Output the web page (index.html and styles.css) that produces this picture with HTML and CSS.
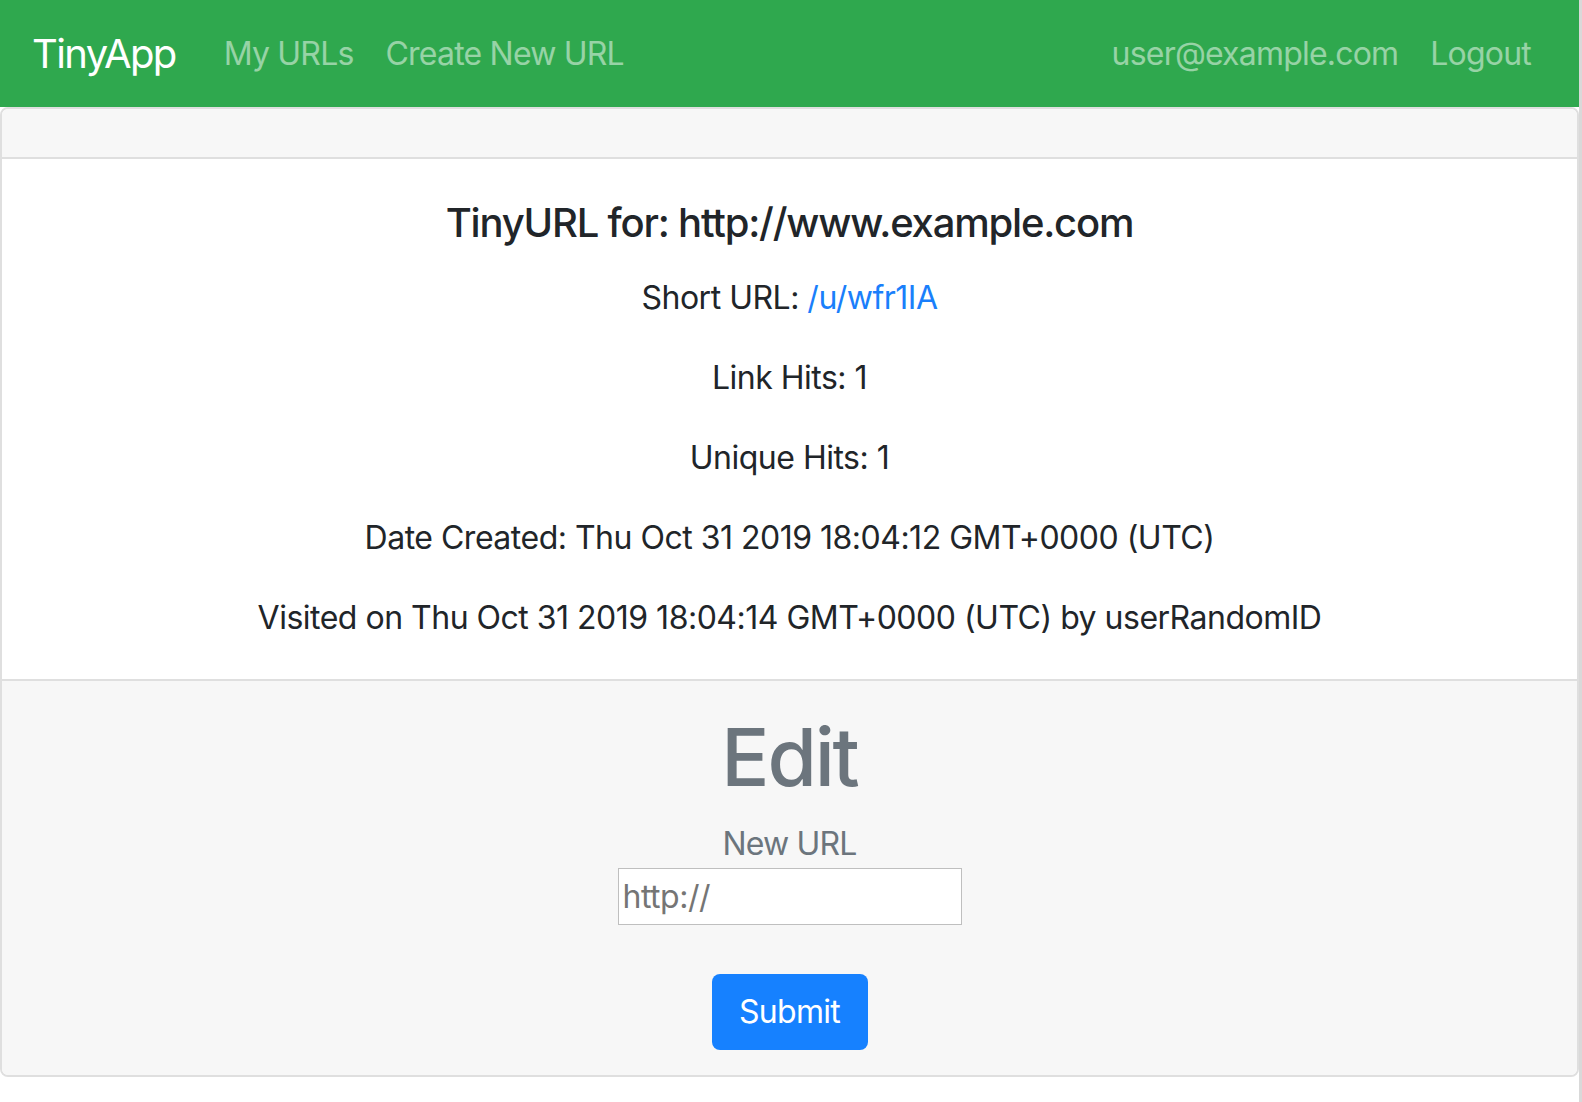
FILE: index.html
```html
<!DOCTYPE html>
<html lang="en">
<head>
<meta charset="utf-8">
<title>TinyApp</title>
<link rel="stylesheet" href="styles.css">
</head>
<body>
<nav class="navbar">
  <a class="brand" href="#">TinyApp</a>
  <ul class="nav">
    <li><a class="nav-link" href="#">My URLs</a></li>
    <li><a class="nav-link" href="#">Create New URL</a></li>
  </ul>
  <ul class="nav nav-right">
    <li><span class="nav-link">user@example.com</span></li>
    <li><a class="nav-link" href="#">Logout</a></li>
  </ul>
</nav>
<main class="card">
  <div class="card-header"></div>
  <div class="card-body">
    <h5 class="card-title">TinyURL for: http://www.example.com</h5>
    <p class="card-text">Short URL: <a class="link" href="#">/u/wfr1IA</a></p>
    <p class="card-text">Link Hits: 1</p>
    <p class="card-text">Unique Hits: 1</p>
    <p class="card-text">Date Created: Thu Oct 31 2019 18:04:12 GMT+0000 (UTC)</p>
    <p class="card-text">Visited on Thu Oct 31 2019 18:04:14 GMT+0000 (UTC) by userRandomID</p>
  </div>
  <div class="card-footer">
    <h1 class="edit-title">Edit</h1>
    <form class="edit-form">
      <label class="edit-label" for="newURL">New URL</label>
      <input class="edit-input" id="newURL" type="text" placeholder="http://">
      <button class="btn-primary" type="submit">Submit</button>
    </form>
  </div>
</main>
</body>
</html>
```
FILE: styles.css
```css
html, body {
  margin: 0;
  padding: 0;
}
body {
  background: #fff;
  min-height: 100vh;
  box-sizing: border-box;
  border-right: 3px solid #d9d9d9;
  font-family: Inter, "Liberation Sans", sans-serif;
  font-size: 32px;
  line-height: 48px;
  letter-spacing: -0.5px;
  color: #212529;
}
.navbar {
  display: flex;
  align-items: center;
  height: 107px;
  padding: 0 32px;
  box-sizing: border-box;
  background: #2fa84e;
}
.brand {
  font-size: 40px;
  line-height: 60px;
  letter-spacing: -1.6px;
  color: #fff;
  text-decoration: none;
  margin-right: 32px;
}
.nav {
  display: flex;
  list-style: none;
  margin: 0;
  padding: 0;
}
.nav-right {
  margin-left: auto;
}
.nav-link {
  display: block;
  padding: 0 16px;
  letter-spacing: -0.8px;
  color: rgba(255, 255, 255, 0.5);
  text-decoration: none;
}
.card {
  display: block;
  border: 2px solid #dfdfdf;
  border-radius: 8px;
  overflow: hidden;
}
.card-header {
  height: 48px;
  background: #f7f7f7;
  border-bottom: 2px solid #dfdfdf;
}
.card-body {
  padding: 40px 40px 37px;
  text-align: center;
}
.card-title {
  font-size: 40px;
  font-weight: 500;
  line-height: 48px;
  letter-spacing: -1.2px;
  margin: 0 0 27px;
}
.card-text {
  margin: 0 0 32px;
}
.card-text:last-child {
  margin-bottom: 0;
}
.link {
  color: #1a7ffb;
  text-decoration: none;
}
.card-footer {
  padding: 28px 40px 25px;
  background: #f7f7f7;
  border-top: 2px solid #dfdfdf;
  text-align: center;
}
.edit-title {
  font-size: 80px;
  font-weight: 500;
  line-height: 96px;
  letter-spacing: -2.2px;
  margin: 0 0 15px;
  color: #6c757d;
}
.edit-form {
  display: flex;
  flex-direction: column;
  align-items: center;
  margin: 0;
}
.edit-label {
  color: #6c757d;
  letter-spacing: -0.85px;
}
.edit-input {
  width: 344px;
  height: 57px;
  box-sizing: border-box;
  border: 1px solid #bfbfbf;
  padding: 0 4px;
  font-family: inherit;
  font-size: 32px;
  letter-spacing: -0.5px;
  color: #212529;
  background: #fff;
  outline: none;
}
.edit-input::placeholder {
  color: #757575;
}
.btn-primary {
  margin-top: 49px;
  width: 156px;
  height: 76px;
  box-sizing: border-box;
  padding: 0;
  border: none;
  border-radius: 8px;
  background: #1681ff;
  color: #fff;
  font-family: inherit;
  font-size: 32px;
  line-height: 48px;
  letter-spacing: -0.7px;
}
```
